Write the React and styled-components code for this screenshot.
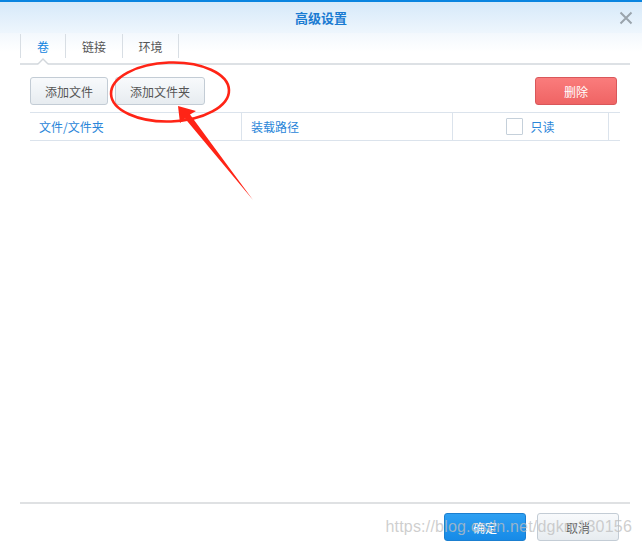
import styled, { createGlobalStyle } from 'styled-components';

const GlobalStyle = createGlobalStyle`
  html, body {
    margin: 0;
    padding: 0;
    background: #fff;
  }
  body {
    font-family: "Liberation Sans", "Noto Sans CJK SC", sans-serif;
  }
`

const Dialog = styled.div`
  position: relative;
  width: 642px;
  height: 545px;
  display: flex;
  flex-direction: column;
  background: #fff;
  overflow: hidden;
  box-sizing: border-box;
`

const Header = styled.div`
  height: 31px;
  border-top: 2px solid #0a84e0;
  background: linear-gradient(#d6e9f9, #eef6fd);
  display: flex;
  align-items: center;
  justify-content: center;
  position: relative;

  h1 {
    margin: 0;
    font-size: 13px;
    font-weight: 600;
    color: #1a7bd2;
    font-family: "Noto Sans CJK SC", sans-serif;
  }
`

const CloseBtn = styled.button`
  position: absolute;
  right: 9px;
  top: 9px;
  width: 14px;
  height: 14px;
  padding: 0;
  border: none;
  background: none;
  display: flex;
`

const TabBar = styled.div`
  height: 32px;
  padding-left: 20px;
  display: flex;
  align-items: flex-end;
  position: relative;
  background: linear-gradient(#f3f8fd, #ffffff 60%);

  &::after {
    content: "";
    position: absolute;
    left: 20px;
    right: 12px;
    bottom: 0;
    height: 2px;
    background: #dde1e5;
  }
`

const Tab = styled.div`
  width: ${p => p.$w}px;
  height: 24px;
  margin-bottom: 7px;
  border-left: 1px solid #d8dee4;
  ${p => p.$last && 'border-right: 1px solid #d8dee4;'}
  display: flex;
  align-items: center;
  justify-content: center;
  font-size: 12px;
  color: ${p => p.$active ? '#0f83de' : '#555'};
  font-family: "Noto Sans CJK SC", sans-serif;
  position: relative;
  box-sizing: border-box;
`

const Notch = styled.div`
  position: absolute;
  left: 37px;
  bottom: 1px;
  width: 0;
  height: 0;
  border-left: 6px solid transparent;
  border-right: 6px solid transparent;
  border-bottom: 6px solid #d2d7dc;
  z-index: 2;

  &::after {
    content: "";
    position: absolute;
    left: -5px;
    top: 1.5px;
    border-left: 5px solid transparent;
    border-right: 5px solid transparent;
    border-bottom: 5px solid #fff;
  }
`

const Toolbar = styled.div`
  display: flex;
  align-items: center;
  gap: 7px;
  padding: 12px 25px 0 30px;
  height: 28px;
`

const Btn = styled.button`
  height: 28px;
  padding: 0 14px;
  border-radius: 3px;
  font-size: 12px;
  font-family: "Noto Sans CJK SC", sans-serif;
  box-sizing: border-box;
  border: 1px solid ${p => p.$variant === 'danger' ? '#d9575a' : p.$variant === 'primary' ? '#1b7fd0' : '#c3ccd5'};
  background: ${p => p.$variant === 'danger'
    ? 'linear-gradient(#fa7c7c, #ef6464)'
    : p.$variant === 'primary'
      ? 'linear-gradient(#2ea0f2, #168ae7)'
      : 'linear-gradient(#f8fafc, #e7ecf0)'};
  color: ${p => p.$variant ? '#fff' : '#555'};
  width: ${p => p.$w ? p.$w + 'px' : 'auto'};
  ${p => p.$push && 'margin-left: auto;'}
`

const Table = styled.div`
  margin: 7px 22px 0 30px;
  border-top: 1px solid #dbe3ec;
  border-bottom: 1px solid #dbe3ec;
  display: grid;
  grid-template-columns: 212px 211px 156px 11px;
  height: 27px;
`

const Cell = styled.div`
  display: flex;
  align-items: center;
  justify-content: ${p => p.$center ? 'center' : 'flex-start'};
  gap: 7px;
  padding-left: ${p => p.$center ? 0 : 9}px;
  border-right: ${p => p.$noline ? 'none' : '1px solid #dbe3ec'};
  font-size: 12px;
  color: #2a86d9;
  font-family: "Noto Sans CJK SC", sans-serif;
`

const Check = styled.span`
  width: 17px;
  height: 17px;
  border: 1px solid #c5d0da;
  border-radius: 1px;
  background: #fff;
  box-sizing: border-box;
`

const Body = styled.div`
  flex: 1;
`

const Footer = styled.div`
  margin: 0 12px 0 20px;
  border-top: 2px solid #dfe1e3;
  padding: 9px 11px 4px 0;
  display: flex;
  justify-content: flex-end;
  gap: 11px;
`

const Watermark = styled.div`
  position: absolute;
  right: 10px;
  bottom: 9px;
  font-size: 16px;
  font-family: "Liberation Sans", sans-serif;
  color: rgba(190, 190, 190, 0.75);
  pointer-events: none;
  letter-spacing: 0.2px;
`

const Annotation = styled.svg`
  position: absolute;
  left: 0;
  top: 0;
  pointer-events: none;
`

const App = () => {
  return (
    <Dialog>
      <GlobalStyle />
      <Header>
        <h1>高级设置</h1>
        <CloseBtn>
          <svg width="14" height="14" viewBox="0 0 14 14">
            <path d="M1.5 1.5 L12.5 12.5 M12.5 1.5 L1.5 12.5" stroke="#9aa4ac" strokeWidth="2" />
          </svg>
        </CloseBtn>
      </Header>

      <TabBar>
        <Tab $w={45} $active>卷</Tab>
        <Tab $w={57}>链接</Tab>
        <Tab $w={57} $last>环境</Tab>
        <Notch />
      </TabBar>

      <Toolbar>
        <Btn>添加文件</Btn>
        <Btn>添加文件夹</Btn>
        <Btn $variant="danger" $w={82} $push>删除</Btn>
      </Toolbar>

      <Table>
        <Cell>文件/文件夹</Cell>
        <Cell>装载路径</Cell>
        <Cell $center><Check />只读</Cell>
        <Cell $noline />
      </Table>

      <Body />

      <Footer>
        <Btn $variant="primary" $w={82}>确定</Btn>
        <Btn $w={82}>取消</Btn>
      </Footer>

      <Watermark>https://blog.csdn.net/dgkm130156</Watermark>

      <Annotation width="642" height="545" viewBox="0 0 642 545">
        <ellipse cx="170" cy="92" rx="59" ry="29.5" fill="none" stroke="#ff2416" strokeWidth="2.6" transform="rotate(-2 170 92)" />
        <polygon points="178,106 196,111 190,114.5 253,200 185,118.5 180,123" fill="#ff2416" />
      </Annotation>
    </Dialog>
  );
}

export default App
